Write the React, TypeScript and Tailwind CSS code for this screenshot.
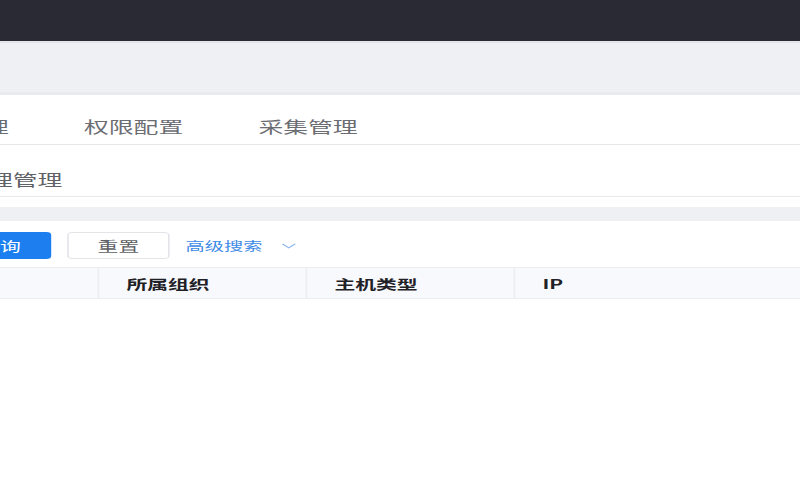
const tabs = ["资产管理", "权限配置", "采集管理"];
const columns = ["", "所属组织", "主机类型", "IP"];

export default function App() {
  return (
    <div className="w-[800px] h-[500px] overflow-hidden bg-white font-['Noto_Sans_CJK_SC','Noto_Sans',sans-serif]">
      {/* the whole strip is shown stretched wide */}
      <div className="w-[500px] origin-top-left scale-x-[1.6]">
        {/* Top bar */}
        <div className="h-[41px] bg-[#292a34]" />

        {/* Breadcrumb area */}
        <div className="h-[54px] bg-[#eff0f4] border-t-2 border-[#e3e5ea] border-b-[3px] border-b-[#e9eaef]" />

        {/* Tabs */}
        <div className="bg-white">
          <div className="h-[50px] flex items-center pt-[14px] border-b border-[#e6e7eb] ml-[-80px]">
            {tabs.map((t) => (
              <div key={t} className="w-[109px] shrink-0 text-center text-[15.5px] text-[#6b6d73]">
                {t}
              </div>
            ))}
          </div>
          <div className="h-[52px] flex items-center pt-[18px] border-b border-[#e8e9ed] ml-[-23px]">
            <span className="text-[15.5px] text-[#5f6166]">代理管理</span>
          </div>
        </div>

        <div className="h-[10px] bg-white" />
        <div className="h-[14px] bg-[#eff0f4]" />

        {/* Search bar */}
        <div className="bg-white pt-[11px]">
          <div className="flex items-center gap-[10px] ml-[-32px]">
            <button className="w-[64px] h-[27px] rounded-[3px] bg-[#1d7fef] text-white text-[13px]">
              查询
            </button>
            <button className="w-[64px] h-[27px] rounded-[3px] border border-[#e2e4e8] bg-white text-[#5e6065] text-[13px]">
              重置
            </button>
            <div className="flex items-center gap-[12px] text-[#3d8ae5] text-[12px]">
              <span>高级搜索</span>
              <svg width="9" height="6" viewBox="0 0 9 6" fill="none" className="mt-[1px]">
                <path d="M0.5 0.8 L4.5 4.8 L8.5 0.8" stroke="#8fb9ec" strokeWidth="1" />
              </svg>
            </div>
          </div>

          {/* Table header */}
          <div className="mt-[8px] h-[32px] flex items-center bg-[#f7f9fc] border-y border-[#ebedf1] ml-[-68px]">
            {columns.map((c, i) => (
              <div
                key={i}
                className={`w-[130px] shrink-0 h-full flex items-center pt-[2px] px-[17px] text-[13px] font-bold text-[#1f2126] ${
                  i < columns.length - 1 ? "border-r border-[#eceef2]" : ""
                }`}
              >
                {c}
              </div>
            ))}
          </div>
        </div>
      </div>
    </div>
  );
}
